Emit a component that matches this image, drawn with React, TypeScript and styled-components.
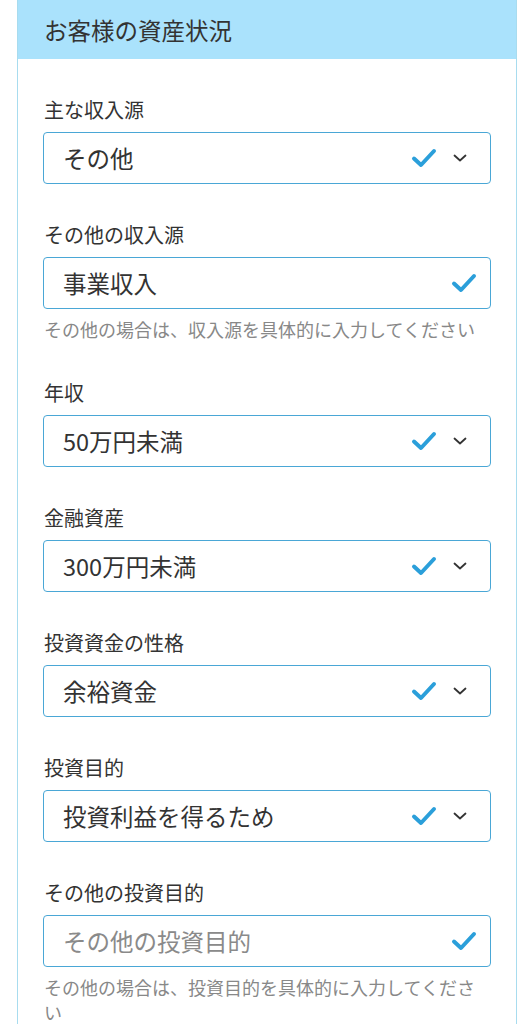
import * as React from 'react'
import styled, { createGlobalStyle } from 'styled-components'

const GlobalStyle = createGlobalStyle`
  html, body {
    margin: 0;
    padding: 0;
    background: #ffffff;
    font-family: 'Noto Sans CJK JP', 'Noto Sans', sans-serif;
    color: #333333;
  }
`

const Page = styled.div`
  width: 530px;
  padding: 0 13px 0 17px;
  box-sizing: border-box;
`

const Card = styled.section`
  border: 1px solid #a8dcef;
  border-top: none;
  background: #ffffff;
`

const CardHeader = styled.h2`
  margin: 0;
  height: 59px;
  display: flex;
  align-items: center;
  padding-left: 26px;
  background: #aae2fc;
  font-size: 23.5px;
  font-weight: 400;
  color: #333333;
`

const CardBody = styled.div`
  padding: 37px 25px 0 25px;
  display: flex;
  flex-direction: column;
`

const Field = styled.div`
  display: flex;
  flex-direction: column;
  margin-bottom: 37px;
`

const Label = styled.label`
  font-size: 20px;
  line-height: 28px;
  color: #333333;
  padding-left: 1px;
  margin-bottom: 8px;
`

const Box = styled.div<{ $select?: boolean }>`
  height: 52px;
  box-sizing: border-box;
  border: 1.5px solid #4aa7d6;
  border-radius: 4px;
  display: flex;
  align-items: center;
  padding: 0 ${p => (p.$select ? '23px' : '13px')} 0 19px;
`

const Value = styled.span<{ $placeholder?: boolean }>`
  flex: 1;
  font-size: 23.5px;
  color: ${p => (p.$placeholder ? '#8a8a8a' : '#333333')};
  white-space: nowrap;
`

const Icons = styled.div`
  display: flex;
  align-items: center;
  gap: 16px;
`

const Help = styled.p`
  margin: 8px 0 0 0;
  padding-left: 1px;
  font-size: 18px;
  line-height: 25px;
  color: #888888;
`

function Check() {
  return (
    <svg width="26" height="20" viewBox="0 0 26 20">
      <path d="M3 10.5 L10 17 L23 3" fill="none" stroke="#2b9fda" strokeWidth="4" strokeLinecap="round" strokeLinejoin="round" />
    </svg>
  )
}

function Chevron() {
  return (
    <svg width="14" height="10" viewBox="0 0 14 10">
      <path d="M1.5 2.5 L7 7.5 L12.5 2.5" fill="none" stroke="#333333" strokeWidth="1.8" strokeLinecap="round" strokeLinejoin="round" />
    </svg>
  )
}

interface FieldDef {
  label: string
  value: string
  select?: boolean
  placeholder?: boolean
  help?: string
}

const fields: FieldDef[] = [
  { label: '主な収入源', value: 'その他', select: true },
  { label: 'その他の収入源', value: '事業収入', help: 'その他の場合は、収入源を具体的に入力してください' },
  { label: '年収', value: '50万円未満', select: true },
  { label: '金融資産', value: '300万円未満', select: true },
  { label: '投資資金の性格', value: '余裕資金', select: true },
  { label: '投資目的', value: '投資利益を得るため', select: true },
  {
    label: 'その他の投資目的',
    value: 'その他の投資目的',
    placeholder: true,
    help: 'その他の場合は、投資目的を具体的に入力してください',
  },
]

export default function App() {
  return (
    <Page>
      <GlobalStyle />
      <Card>
        <CardHeader>お客様の資産状況</CardHeader>
        <CardBody>
          {fields.map(f => (
            <Field key={f.label}>
              <Label>{f.label}</Label>
              <Box $select={f.select}>
                <Value $placeholder={f.placeholder}>{f.value}</Value>
                <Icons>
                  <Check />
                  {f.select && <Chevron />}
                </Icons>
              </Box>
              {f.help && <Help>{f.help}</Help>}
            </Field>
          ))}
        </CardBody>
      </Card>
    </Page>
  )
}
